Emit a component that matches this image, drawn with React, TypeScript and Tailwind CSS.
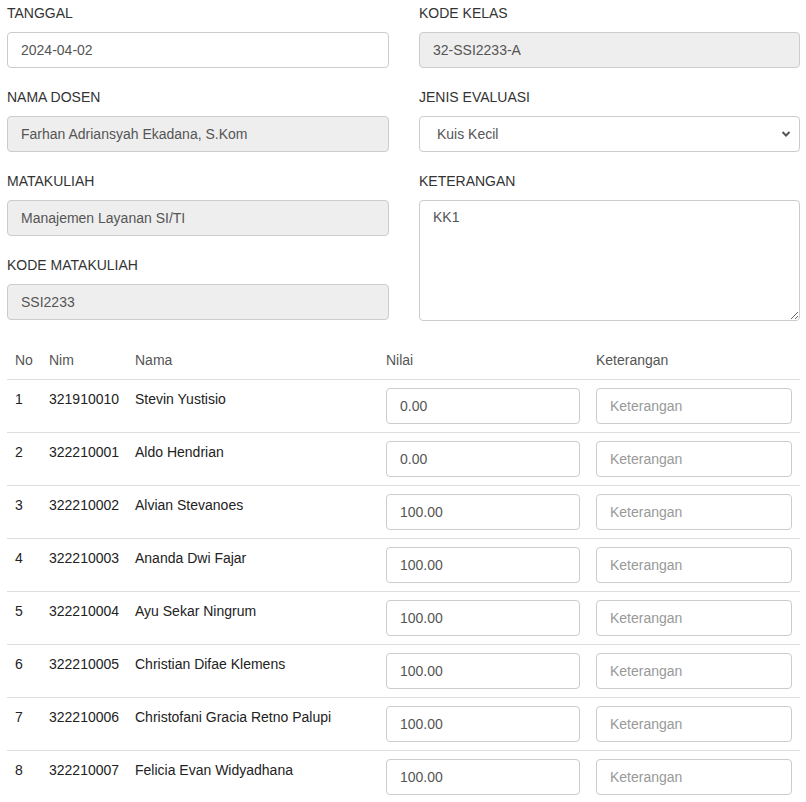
import React from "react";

const rows = [
  ["1", "321910010", "Stevin Yustisio", "0.00"],
  ["2", "322210001", "Aldo Hendrian", "0.00"],
  ["3", "322210002", "Alvian Stevanoes", "100.00"],
  ["4", "322210003", "Ananda Dwi Fajar", "100.00"],
  ["5", "322210004", "Ayu Sekar Ningrum", "100.00"],
  ["6", "322210005", "Christian Difae Klemens", "100.00"],
  ["7", "322210006", "Christofani Gracia Retno Palupi", "100.00"],
  ["8", "322210007", "Felicia Evan Widyadhana", "100.00"],
];

function Label({ children }: { children: React.ReactNode }) {
  return <div className="mb-[8px] leading-[21px] text-[#333]">{children}</div>;
}

function Field({ label, value, disabled }: { label: string; value: string; disabled?: boolean }) {
  return (
    <div className="mb-[19px]">
      <Label>{label}</Label>
      <input
        readOnly
        value={value}
        className={`block h-[36px] w-full rounded-[4px] border border-[#ccc] px-[13px] text-[14px] text-[#555] outline-none ${disabled ? "bg-[#eee]" : "bg-white"}`}
      />
    </div>
  );
}

export default function App() {
  return (
    <div
      className="w-[806px] bg-white px-[7px] pr-[6px] pt-[3px] text-[14px] text-[#333]"
      style={{ fontFamily: '"Liberation Sans", Arial, sans-serif' }}
    >
      <div className="grid grid-cols-[382px_381px] gap-x-[30px]">
        <div>
          <Field label="TANGGAL" value="2024-04-02" />
          <Field label="NAMA DOSEN" value="Farhan Adriansyah Ekadana, S.Kom" disabled />
          <Field label="MATAKULIAH" value="Manajemen Layanan SI/TI" disabled />
          <Field label="KODE MATAKULIAH" value="SSI2233" disabled />
        </div>
        <div>
          <Field label="KODE KELAS" value="32-SSI2233-A" disabled />
          <div className="mb-[19px]">
            <Label>JENIS EVALUASI</Label>
            <div className="relative">
              <select
                defaultValue="kk"
                className="block h-[36px] w-full appearance-none rounded-[4px] border border-[#ccc] bg-white pl-[17px] pr-[30px] text-[14px] text-[#555] outline-none"
              >
                <option value="kk">Kuis Kecil</option>
              </select>
              <svg
                className="pointer-events-none absolute right-[9px] top-[14px]"
                width="10"
                height="8"
                viewBox="0 0 10 8"
              >
                <path d="M1.5 2 L5 5.5 L8.5 2" fill="none" stroke="#555" strokeWidth="2" />
              </svg>
            </div>
          </div>
          <div>
            <Label>KETERANGAN</Label>
            <textarea
              defaultValue="KK1"
              className="block h-[121px] w-full rounded-[4px] border border-[#ccc] bg-white px-[13px] py-[6px] text-[14px] leading-[21px] text-[#555] outline-none"
            />
          </div>
        </div>
      </div>

      <div className="mt-[3px] w-[793px]">
        <div className="grid grid-cols-[34px_86px_251px_210px_212px] border-b border-[#ddd] text-[#555]">
          {["No", "Nim", "Nama", "Nilai", "Keterangan"].map((h) => (
            <div key={h} className="p-[8px] leading-[21px]">
              {h}
            </div>
          ))}
        </div>
        {rows.map((r, i) => (
          <div
            key={r[0]}
            className={`grid grid-cols-[34px_86px_251px_210px_212px] text-[#222] ${i < rows.length - 1 ? "border-b border-[#ddd]" : ""}`}
          >
            <div className="px-[8px] pt-[9px] leading-[21px]">{r[0]}</div>
            <div className="px-[8px] pt-[9px] leading-[21px]">{r[1]}</div>
            <div className="px-[8px] pt-[9px] leading-[21px]">{r[2]}</div>
            <div className="p-[8px]">
              <input
                readOnly
                value={r[3]}
                className="block h-[36px] w-full rounded-[4px] border border-[#ccc] bg-white px-[13px] text-[14px] text-[#555] outline-none"
              />
            </div>
            <div className="p-[8px]">
              <input
                placeholder="Keterangan"
                className="block h-[36px] w-full rounded-[4px] border border-[#ccc] bg-white px-[13px] text-[14px] text-[#555] outline-none placeholder:text-[#999]"
              />
            </div>
          </div>
        ))}
      </div>
    </div>
  );
}
